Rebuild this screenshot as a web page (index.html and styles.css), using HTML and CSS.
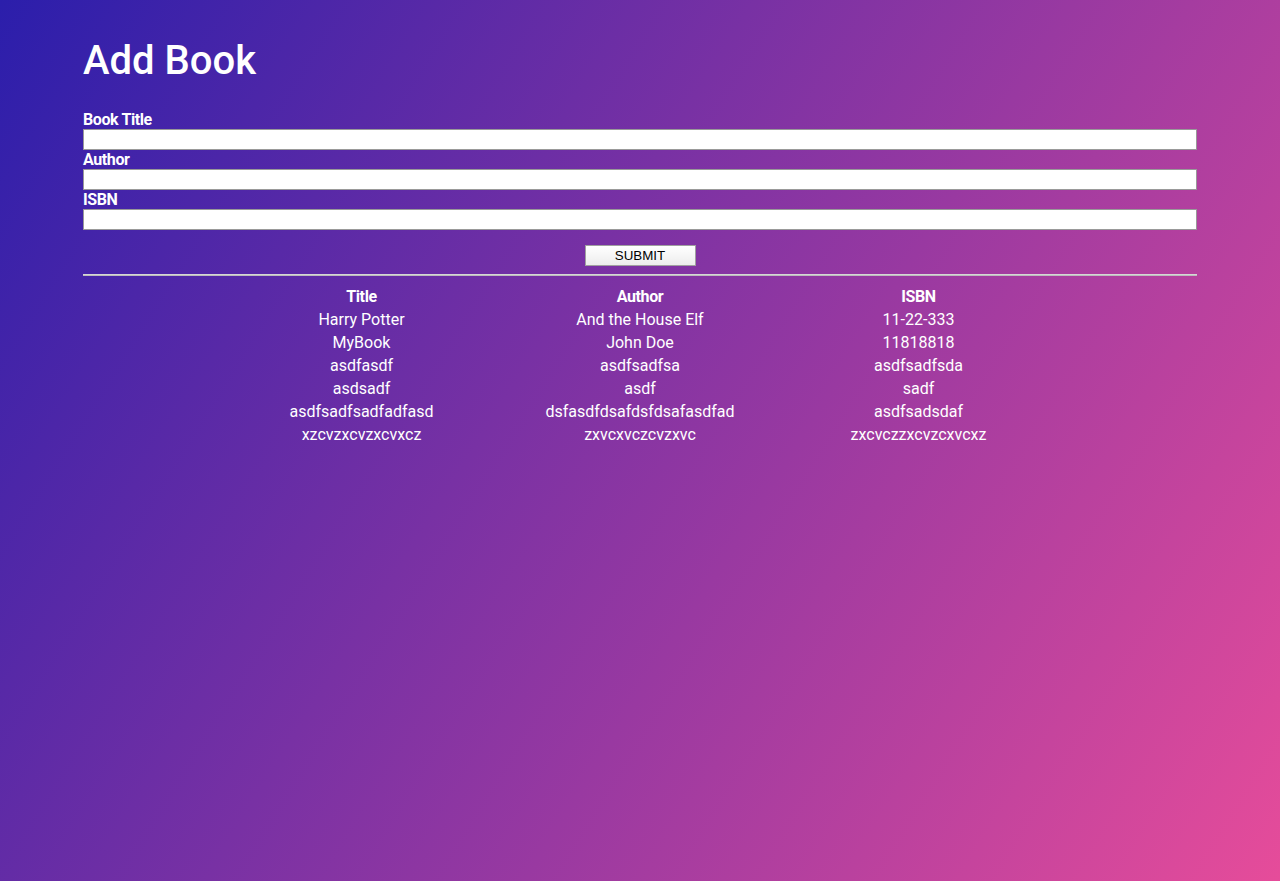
FILE: index.html
```html
<!DOCTYPE html>
<html>
<head>
<meta charset="utf-8">
<link rel="stylesheet" href="styles.css">
</head>
<body>
<div class="page">
  <h1 class="title">Add Book</h1>
  <form class="form">
    <label class="label">Book Title</label>
    <input class="field" type="text">
    <label class="label">Author</label>
    <input class="field" type="text">
    <label class="label">ISBN</label>
    <input class="field" type="text">
    <div class="actions"><button class="submit" type="button">SUBMIT</button></div>
  </form>
  <hr class="rule">
  <table class="books">
    <thead>
      <tr><th>Title</th><th>Author</th><th>ISBN</th></tr>
    </thead>
    <tbody>
      <tr><td>Harry Potter</td><td>And the House Elf</td><td>11-22-333</td></tr>
      <tr><td>MyBook</td><td>John Doe</td><td>11818818</td></tr>
      <tr><td>asdfasdf</td><td>asdfsadfsa</td><td>asdfsadfsda</td></tr>
      <tr><td>asdsadf</td><td>asdf</td><td>sadf</td></tr>
      <tr><td>asdfsadfsadfadfasd</td><td>dsfasdfdsafdsfdsafasdfad</td><td>asdfsadsdaf</td></tr>
      <tr><td>xzcvzxcvzxcvxcz</td><td>zxvcxvczcvzxvc</td><td>zxcvczzxcvzcxvcxz</td></tr>
    </tbody>
  </table>
</div>
</body>
</html>
```
FILE: styles.css
```css
html, body {
  margin: 0;
  padding: 0;
  height: 100%;
}
body {
  background: linear-gradient(122deg, #2b1eab 0%, #e64c9a 100%);
  color: #ffffff;
  font-family: Roboto, "Liberation Sans", sans-serif;
  font-size: 16px;
}
.page {
  padding: 0 83px;
}
.title {
  margin: 0;
  padding-top: 37px;
  font-size: 40px;
  line-height: 47px;
  font-weight: 500;
}
.form {
  display: flex;
  flex-direction: column;
  margin-top: 26px;
}
.label {
  font-weight: 700;
  font-size: 16px;
  line-height: 19px;
  letter-spacing: -0.4px;
  display: block;
}
.field {
  display: block;
  box-sizing: border-box;
  width: 100%;
  height: 21px;
  margin: 0;
  border: 1px solid #999999;
  background: #ffffff;
  padding: 1px 2px;
}
.actions {
  display: flex;
  justify-content: center;
  margin-top: 15px;
}
.submit {
  box-sizing: border-box;
  width: 111px;
  height: 21px;
  padding: 0;
  font-family: "Liberation Sans", Arial, sans-serif;
  font-size: 13.33px;
  color: #000000;
  background: linear-gradient(#ffffff, #ededed);
  border: 1px solid #a0a0a0;
  border-radius: 0;
}
.rule {
  margin: 8px 0 0;
  border: 0;
  border-top: 1px solid #d6d6d6;
  border-bottom: 1px solid #bdbdbd;
  height: 0;
}
.books {
  width: 75%;
  margin: 9px auto 0;
  border-collapse: collapse;
  table-layout: fixed;
}
.books th, .books td {
  text-align: center;
  padding: 0;
  height: 23px;
  font-size: 16px;
}
.books th {
  font-weight: 700;
  letter-spacing: -0.4px;
}
```
